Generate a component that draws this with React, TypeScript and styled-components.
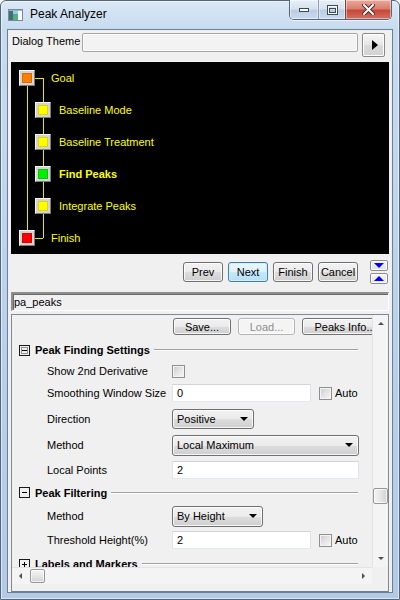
import styled, { createGlobalStyle } from "styled-components";

const GlobalStyle = createGlobalStyle`
  html, body { margin: 0; padding: 0; }
  body {
    width: 400px;
    height: 600px;
    overflow: hidden;
    font-family: "Liberation Sans", Arial, sans-serif;
    font-size: 11px;
    color: #000;
  }
  * { box-sizing: border-box; }
`;

const treeSteps = [
  { label: "Goal", level: 0, color: "#ff8000" },
  { label: "Baseline Mode", level: 1, color: "#ffff00" },
  { label: "Baseline Treatment", level: 1, color: "#ffff00" },
  { label: "Find Peaks", level: 1, color: "#00f000", current: true },
  { label: "Integrate Peaks", level: 1, color: "#ffff00" },
  { label: "Finish", level: 0, color: "#ff0000" },
];

const AppIcon = () => (
  <svg width="15" height="12" viewBox="0 0 15 12">
    <rect x="0.5" y="0.5" width="14" height="11" fill="#fff" stroke="#7d8a96" />
    <rect x="1" y="1" width="4" height="10" fill="#3f6f78" />
    <rect x="5" y="1" width="5" height="10" fill="#56b07a" />
    <rect x="5" y="1" width="5" height="4" fill="#8fd0e8" />
    <rect x="1" y="1" width="13" height="1" fill="#9fb4c8" />
  </svg>
);

const MinGlyph = () => (
  <svg width="12" height="6" viewBox="0 0 12 6">
    <rect x="1.5" y="1.5" width="9" height="3" fill="#fff" stroke="#3b4b5e" />
  </svg>
);

const MaxGlyph = () => (
  <svg width="11" height="10" viewBox="0 0 11 10">
    <rect x="0.5" y="0.5" width="10" height="9" fill="none" stroke="#3b4b5e" />
    <rect x="1.5" y="1.5" width="8" height="7" fill="none" stroke="#fff" />
    <rect x="2.5" y="3.5" width="6" height="4" fill="none" stroke="#3b4b5e" />
  </svg>
);

const CloseGlyph = () => (
  <svg width="13" height="11" viewBox="0 0 13 11">
    <path d="M2 1 L11 10 M11 1 L2 10" stroke="#4b2a26" strokeWidth="4" strokeLinecap="square" />
    <path d="M2 1 L11 10 M11 1 L2 10" stroke="#fff" strokeWidth="2" strokeLinecap="square" />
  </svg>
);

const GroupIcon = ({ kind }: { kind: "focus" | "minus" | "plus" }) => (
  <svg width="11" height="11" viewBox="0 0 11 11">
    <rect x="0.5" y="0.5" width="10" height="10" fill="none" stroke="#1a1a1a" />
    {kind === "focus" && (
      <rect x="2.5" y="2.5" width="6" height="6" fill="none" stroke="#333" strokeDasharray="1 1" />
    )}
    <line x1="3" y1="5.5" x2="8" y2="5.5" stroke="#000" />
    {kind === "plus" && <line x1="5.5" y1="3" x2="5.5" y2="8" stroke="#000" />}
  </svg>
);

const App = () => {
  return (
    <>
      <GlobalStyle />
      <Window>
        <TitleBar>
          <IconSlot>
            <AppIcon />
          </IconSlot>
          <Title>Peak Analyzer</Title>
          <CaptionGroup>
            <CaptionButton $w={28}>
              <MinGlyph />
            </CaptionButton>
            <CaptionButton $w={27}>
              <MaxGlyph />
            </CaptionButton>
            <CaptionButton $w={46} $close>
              <CloseGlyph />
            </CaptionButton>
          </CaptionGroup>
        </TitleBar>

        <Client>
          <ThemeRow>
            <ThemeLabel>Dialog Theme</ThemeLabel>
            <ThemeInput />
            <PlayButton>
              <RightTriangle />
            </PlayButton>
          </ThemeRow>

          <TreePanel>
            <TreeLines width="378" height="192" viewBox="0 0 378 192">
              <line x1="16.5" y1="24" x2="16.5" y2="168" stroke="#e8e800" />
              <line x1="32.5" y1="16" x2="32.5" y2="176" stroke="#e8e800" />
              <line x1="24" y1="16.5" x2="32" y2="16.5" stroke="#e8e800" />
              <line x1="24" y1="176.5" x2="32" y2="176.5" stroke="#e8e800" />
            </TreeLines>
            {treeSteps.map((s) => (
              <TreeRow key={s.label} $level={s.level}>
                <NodeBox>
                  <NodeFill $color={s.color} />
                </NodeBox>
                <NodeLabel $current={!!s.current}>{s.label}</NodeLabel>
              </TreeRow>
            ))}
          </TreePanel>

          <NavRow>
            <PushButton $w={40}>Prev</PushButton>
            <PushButton $w={40} $variant="focus">
              Next
            </PushButton>
            <PushButton $w={40}>Finish</PushButton>
            <PushButton $w={40}>Cancel</PushButton>
            <ArrowStack>
              <SmallArrowButton>
                <BlueTriangle $dir="down" />
              </SmallArrowButton>
              <SmallArrowButton>
                <BlueTriangle $dir="up" />
              </SmallArrowButton>
            </ArrowStack>
          </NavRow>

          <NameField>pa_peaks</NameField>

          <SettingsPanel>
            <Viewport>
              <Content>
                <ToolRow>
                  <PushButton $w={58} $h={17}>
                    Save...
                  </PushButton>
                  <PushButton $w={57} $h={17} $variant="disabled">
                    Load...
                  </PushButton>
                  <PushButton $w={86} $h={17}>
                    Peaks Info...
                  </PushButton>
                </ToolRow>

                <GroupHeader $h={22}>
                  <GroupIcon kind="focus" />
                  <GroupTitle>Peak Finding Settings</GroupTitle>
                  <GroupLine />
                </GroupHeader>

                <FieldRow $h={20}>
                  <FieldLabel>Show 2nd Derivative</FieldLabel>
                  <CheckBox />
                </FieldRow>

                <FieldRow $h={24}>
                  <FieldLabel>Smoothing Window Size</FieldLabel>
                  <TextBox $w={139}>0</TextBox>
                  <AutoGroup>
                    <CheckBox />
                    <span>Auto</span>
                  </AutoGroup>
                </FieldRow>

                <FieldRow $h={27}>
                  <FieldLabel>Direction</FieldLabel>
                  <DropDown $w={82} $h={20}>
                    <span>Positive</span>
                    <DownTriangle />
                  </DropDown>
                </FieldRow>

                <FieldRow $h={26}>
                  <FieldLabel>Method</FieldLabel>
                  <DropDown $w={187} $h={21}>
                    <span>Local Maximum</span>
                    <DownTriangle />
                  </DropDown>
                </FieldRow>

                <FieldRow $h={23}>
                  <FieldLabel>Local Points</FieldLabel>
                  <TextBox $w={187}>2</TextBox>
                </FieldRow>

                <GroupHeader $h={23}>
                  <GroupIcon kind="minus" />
                  <GroupTitle>Peak Filtering</GroupTitle>
                  <GroupLine />
                </GroupHeader>

                <FieldRow $h={24}>
                  <FieldLabel>Method</FieldLabel>
                  <DropDown $w={91} $h={21}>
                    <span>By Height</span>
                    <DownTriangle />
                  </DropDown>
                </FieldRow>

                <FieldRow $h={24}>
                  <FieldLabel>Threshold Height(%)</FieldLabel>
                  <TextBox $w={139}>2</TextBox>
                  <AutoGroup>
                    <CheckBox />
                    <span>Auto</span>
                  </AutoGroup>
                </FieldRow>

                <GroupHeader $h={24}>
                  <GroupIcon kind="plus" />
                  <GroupTitle>Labels and Markers</GroupTitle>
                  <GroupLine />
                </GroupHeader>
              </Content>
            </Viewport>

            <VScroll>
              <ScrollButton $h={17}>
                <ScrollGlyph $dir="up" />
              </ScrollButton>
              <VTrack>
                <VThumb $offset={156} />
              </VTrack>
              <ScrollButton $h={17}>
                <ScrollGlyph $dir="down" />
              </ScrollButton>
            </VScroll>

            <HScroll>
              <ScrollButton $w={17}>
                <ScrollGlyph $dir="left" />
              </ScrollButton>
              <HTrack>
                <HThumb $offset={1} />
              </HTrack>
              <ScrollButton $w={17}>
                <ScrollGlyph $dir="right" />
              </ScrollButton>
            </HScroll>
            <ScrollCorner />
          </SettingsPanel>
        </Client>
      </Window>
    </>
  );
};

export default App;

const Window = styled.div`
  width: 400px;
  height: 600px;
  display: flex;
  flex-direction: column;
  padding: 0 6px 6px;
  border: 1px solid #52677f;
  border-radius: 6px 6px 0 0;
  background: linear-gradient(180deg, #dbe8f6 0px, #c7dbf0 28px, #b9d0ea 60%, #b2cae6 100%);
  box-shadow: inset 0 0 0 1px rgba(255, 255, 255, 0.55);
`;

const TitleBar = styled.div`
  height: 28px;
  display: flex;
  align-items: flex-start;
  flex-shrink: 0;
`;

const IconSlot = styled.div`
  margin: 8px 0 0 1px;
  display: flex;
`;

const Title = styled.div`
  margin: 6px 0 0 7px;
  font-family: "Liberation Sans", Arial, sans-serif;
  font-size: 12px;
  line-height: 14px;
  color: #000;
`;

const CaptionGroup = styled.div`
  margin: -1px 1px 0 auto;
  height: 20px;
  display: flex;
  border: 1px solid #56677c;
  border-top: none;
  border-radius: 0 0 5px 5px;
  overflow: hidden;
  box-shadow: 0 1px 0 rgba(255, 255, 255, 0.6);
`;

const CaptionButton = styled.div<{ $w: number; $close?: boolean }>`
  width: ${(p) => p.$w}px;
  display: flex;
  align-items: center;
  justify-content: center;
  border-left: ${(p) => (p.$close ? "1px solid #6c4a48" : "1px solid #8a9bb0")};
  box-shadow: inset 0 0 0 1px rgba(255, 255, 255, 0.45);
  background: ${(p) =>
    p.$close
      ? "linear-gradient(180deg, #e9a99b 0%, #d98070 45%, #c7483a 55%, #d4705e 100%)"
      : "linear-gradient(180deg, #e8eff8 0%, #d6e2f0 45%, #bccde3 55%, #cbdaee 100%)"};

  &:first-child {
    border-left: none;
  }
`;

const Client = styled.div`
  flex: 1;
  min-height: 0;
  display: flex;
  flex-direction: column;
  padding: 0 3px;
  border: 1px solid #6c7f95;
  background: #f0f0f0;
`;

const ThemeRow = styled.div`
  height: 24px;
  margin-top: 3px;
  display: flex;
  align-items: flex-start;
  flex-shrink: 0;
`;

const ThemeLabel = styled.div`
  width: 71px;
  padding-left: 1px;
  line-height: 17px;
`;

const ThemeInput = styled.div`
  width: 276px;
  height: 19px;
  border: 1px solid #a7a7a7;
  border-radius: 2px;
  background: #f3f3f3;
  box-shadow: inset 0 0 0 1px #fbfbfb;
`;

const PlayButton = styled.div`
  width: 23px;
  height: 24px;
  margin-left: 4px;
  display: flex;
  align-items: center;
  justify-content: center;
  border: 1px solid #8a8a8a;
  border-radius: 2px;
  background: linear-gradient(180deg, #f7f7f7, #e6e6e6 50%, #dadada 51%, #d2d2d2);
  box-shadow: inset 0 0 0 1px #fff;
`;

const RightTriangle = styled.span`
  width: 0;
  height: 0;
  margin-left: 2px;
  border-top: 5px solid transparent;
  border-bottom: 5px solid transparent;
  border-left: 6px solid #000;
`;

const TreePanel = styled.div`
  position: relative;
  height: 192px;
  margin-top: 5px;
  display: flex;
  flex-direction: column;
  background: #000;
  flex-shrink: 0;
`;

const TreeLines = styled.svg`
  position: absolute;
  top: 0;
  left: 0;
  pointer-events: none;
`;

const TreeRow = styled.div<{ $level: number }>`
  position: relative;
  height: 32px;
  display: flex;
  align-items: center;
  padding-left: ${(p) => (p.$level === 0 ? 8 : 24)}px;
  gap: ${(p) => (p.$level === 0 ? 16 : 8)}px;
`;

const NodeBox = styled.div`
  width: 16px;
  height: 16px;
  padding: 2px;
  border: 1px solid;
  border-color: #f4f4f4 #7a7a7a #7a7a7a #f4f4f4;
  background: #d4d4d4;
`;

const NodeFill = styled.div<{ $color: string }>`
  width: 10px;
  height: 10px;
  background: ${(p) => p.$color};
  border: 1px solid rgba(0, 0, 0, 0.15);
`;

const NodeLabel = styled.span<{ $current: boolean }>`
  color: #ffff00;
  font-size: 11px;
  font-weight: ${(p) => (p.$current ? "bold" : "normal")};
  line-height: 14px;
`;

const NavRow = styled.div`
  height: 38px;
  padding: 6px 1px 0 0;
  display: flex;
  align-items: flex-start;
  justify-content: flex-end;
  gap: 5px;
  flex-shrink: 0;
`;

const PushButton = styled.div<{ $w: number; $h?: number; $variant?: "normal" | "focus" | "disabled" }>`
  width: ${(p) => p.$w}px;
  height: ${(p) => p.$h ?? 20}px;
  margin-top: ${(p) => (p.$h ? 0 : 2)}px;
  display: flex;
  align-items: center;
  justify-content: center;
  flex-shrink: 0;
  white-space: nowrap;
  font-size: 11px;
  color: ${(p) => (p.$variant === "disabled" ? "#8d8d8d" : "#000")};
  border-radius: 3px;
  border: 1px solid
    ${(p) => (p.$variant === "focus" ? "#3c7fb1" : p.$variant === "disabled" ? "#b4b4b4" : "#707070")};
  background: ${(p) =>
    p.$variant === "focus"
      ? "linear-gradient(180deg, #ecf7fd 0%, #ddf1fc 50%, #c6e8fb 51%, #b4dff6 100%)"
      : p.$variant === "disabled"
      ? "#f4f4f4"
      : "linear-gradient(180deg, #f2f2f2 0%, #ebebeb 50%, #dddddd 51%, #cfcfcf 100%)"};
  box-shadow: inset 0 0 0 1px ${(p) => (p.$variant === "focus" ? "#d4eefc" : "rgba(255,255,255,0.8)")};
`;

const ArrowStack = styled.div`
  margin-left: 7px;
  display: flex;
  flex-direction: column;
  gap: 2px;
`;

const SmallArrowButton = styled.div`
  width: 18px;
  height: 11px;
  display: flex;
  align-items: center;
  justify-content: center;
  border: 1px solid #8c8c8c;
  border-radius: 2px;
  background: linear-gradient(180deg, #f6f6f6, #e1e1e1);
  box-shadow: inset 0 0 0 1px #fff;
`;

const BlueTriangle = styled.span<{ $dir: "up" | "down" }>`
  width: 0;
  height: 0;
  border-left: 5px solid transparent;
  border-right: 5px solid transparent;
  ${(p) => (p.$dir === "down" ? "border-top: 5px solid #0000ff;" : "border-bottom: 5px solid #0000ff;")}
`;

const NameField = styled.div`
  height: 19px;
  padding-left: 1px;
  display: flex;
  align-items: center;
  border-style: solid;
  border-width: 2px 1px 1px 2px;
  border-color: #8e8e8e #ffffff #ffffff #8e8e8e;
  box-shadow: inset 1px 1px 0 #6a6a6a;
  background: #f0f0f0;
  flex-shrink: 0;
`;

const SettingsPanel = styled.div`
  flex: 1;
  min-height: 0;
  margin-top: 3px;
  display: grid;
  grid-template-columns: minmax(0, 1fr) 16px;
  grid-template-rows: minmax(0, 1fr) 17px;
  padding-bottom: 7px;
  border: 1px solid #828790;
  border-bottom-color: #6c7f95;
`;

const Viewport = styled.div`
  overflow: hidden;
  min-height: 0;
`;

const Content = styled.div`
  width: 380px;
  display: flex;
  flex-direction: column;
`;

const ToolRow = styled.div`
  height: 24px;
  padding: 3px 4px 0 0;
  display: flex;
  align-items: flex-start;
  justify-content: flex-end;
  gap: 7px;
`;

const GroupHeader = styled.div<{ $h: number }>`
  height: ${(p) => p.$h}px;
  padding-left: 7px;
  display: flex;
  align-items: center;
  flex-shrink: 0;
`;

const GroupTitle = styled.span`
  margin-left: 5px;
  font-weight: bold;
  white-space: nowrap;
`;

const GroupLine = styled.div`
  flex: 1;
  margin: 0 34px 0 4px;
  border-top: 1px solid #a0a0a0;
  border-bottom: 1px solid #ffffff;
`;

const FieldRow = styled.div<{ $h: number }>`
  height: ${(p) => p.$h}px;
  padding-left: 35px;
  display: flex;
  align-items: center;
  flex-shrink: 0;
`;

const FieldLabel = styled.span`
  width: 125px;
  white-space: nowrap;
`;

const CheckBox = styled.span`
  width: 13px;
  height: 13px;
  border: 1px solid #8e8f8f;
  background: linear-gradient(135deg, #cbcbcb 0%, #e4e4e4 50%, #f7f7f7 100%);
  box-shadow: inset 0 0 0 1px #f4f4f4;
  flex-shrink: 0;
`;

const TextBox = styled.div<{ $w: number }>`
  width: ${(p) => p.$w}px;
  height: 18px;
  padding-left: 4px;
  display: flex;
  align-items: center;
  background: #fff;
  border: 1px solid;
  border-color: #d0d3d8 #e2e3ea #e3e9ef #e2e3ea;
  flex-shrink: 0;
`;

const AutoGroup = styled.div`
  margin-left: 8px;
  display: flex;
  align-items: center;
  gap: 3px;
`;

const DropDown = styled.div<{ $w: number; $h: number }>`
  width: ${(p) => p.$w}px;
  height: ${(p) => p.$h}px;
  padding: 0 5px 0 4px;
  display: flex;
  align-items: center;
  justify-content: space-between;
  border: 1px solid #707070;
  border-radius: 3px;
  background: linear-gradient(180deg, #f2f2f2 0%, #ebebeb 50%, #dddddd 51%, #cfcfcf 100%);
  box-shadow: inset 0 0 0 1px rgba(255, 255, 255, 0.8);
  flex-shrink: 0;
`;

const DownTriangle = styled.span`
  width: 0;
  height: 0;
  border-left: 4px solid transparent;
  border-right: 4px solid transparent;
  border-top: 4px solid #000;
`;

const VScroll = styled.div`
  min-height: 0;
  display: flex;
  flex-direction: column;
  background: #f4f4f4;
  border-left: 1px solid #e3e3e3;
`;

const HScroll = styled.div`
  display: flex;
  background: #f4f4f4;
  border-top: 1px solid #e3e3e3;
`;

const ScrollCorner = styled.div`
  background: #f0f0f0;
`;

const ScrollButton = styled.div<{ $w?: number; $h?: number }>`
  ${(p) => (p.$w ? `width: ${p.$w}px;` : "")}
  ${(p) => (p.$h ? `height: ${p.$h}px;` : "")}
  display: flex;
  align-items: center;
  justify-content: center;
  flex-shrink: 0;
`;

const ScrollGlyph = styled.span<{ $dir: "up" | "down" | "left" | "right" }>`
  width: 0;
  height: 0;
  ${(p) =>
    p.$dir === "up"
      ? "border-left: 3px solid transparent; border-right: 3px solid transparent; border-bottom: 3px solid #4f4f4f;"
      : p.$dir === "down"
      ? "border-left: 3px solid transparent; border-right: 3px solid transparent; border-top: 3px solid #4f4f4f;"
      : p.$dir === "left"
      ? "border-top: 3px solid transparent; border-bottom: 3px solid transparent; border-right: 3px solid #4f4f4f;"
      : "border-top: 3px solid transparent; border-bottom: 3px solid transparent; border-left: 3px solid #4f4f4f;"}
`;

const VTrack = styled.div`
  flex: 1;
  min-height: 0;
  display: flex;
  flex-direction: column;
  align-items: center;
`;

const VThumb = styled.div<{ $offset: number }>`
  width: 15px;
  height: 16px;
  margin-top: ${(p) => p.$offset}px;
  border: 1px solid #979797;
  border-radius: 2px;
  background: linear-gradient(90deg, #f4f4f4 0%, #e6e6e6 50%, #d2d2d2 100%);
  box-shadow: inset 0 0 0 1px rgba(255, 255, 255, 0.7);
`;

const HTrack = styled.div`
  flex: 1;
  display: flex;
  align-items: center;
`;

const HThumb = styled.div<{ $offset: number }>`
  width: 15px;
  height: 14px;
  margin-left: ${(p) => p.$offset}px;
  border: 1px solid #979797;
  border-radius: 2px;
  background: linear-gradient(180deg, #f4f4f4 0%, #e6e6e6 50%, #d2d2d2 100%);
  box-shadow: inset 0 0 0 1px rgba(255, 255, 255, 0.7);
`;
